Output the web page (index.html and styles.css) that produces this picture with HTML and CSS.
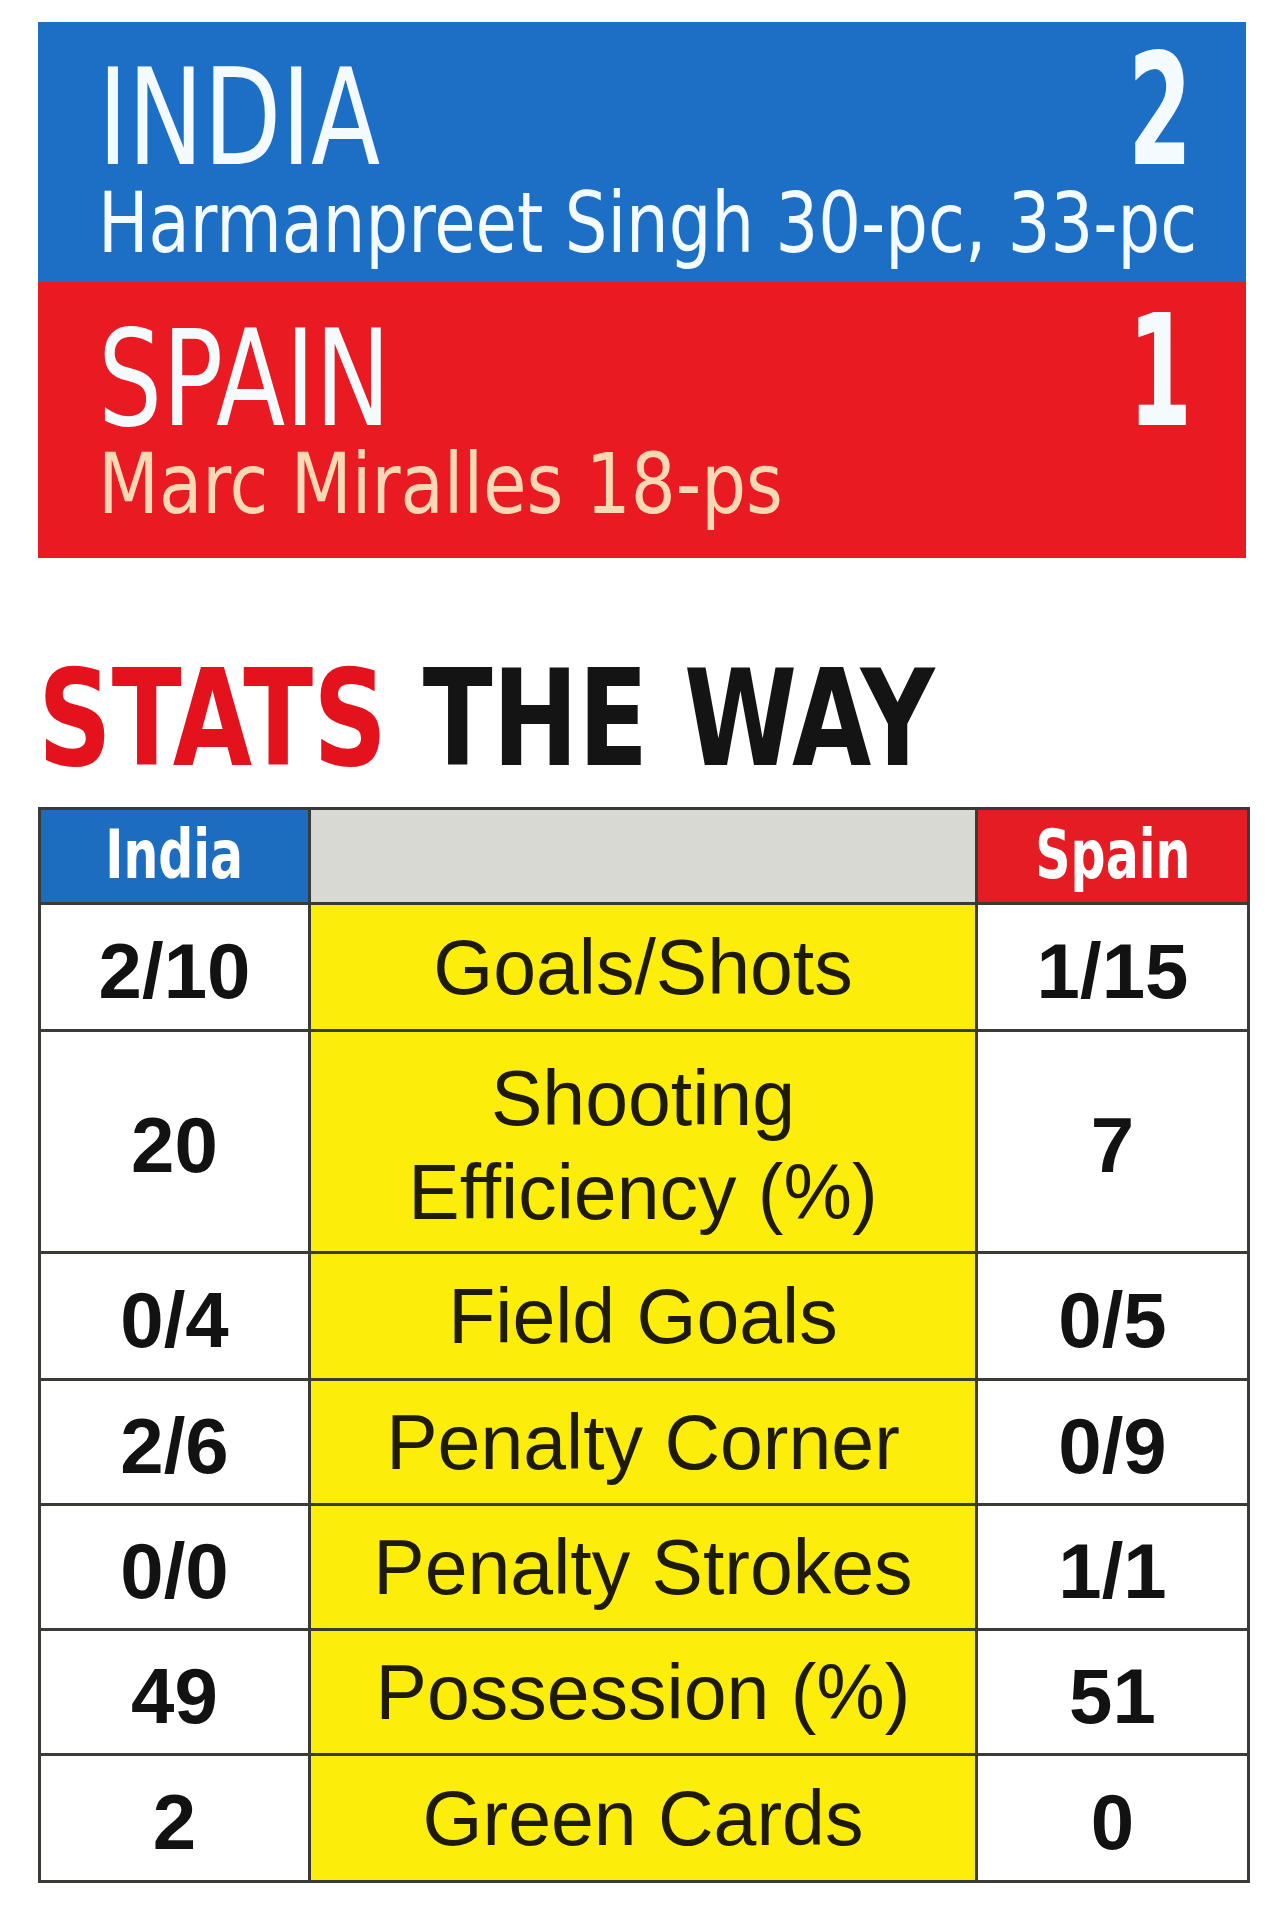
FILE: index.html
```html
<!DOCTYPE html>
<html lang="en">
<head>
<meta charset="utf-8">
<title>India 2 Spain 1 — Stats the way</title>
<link rel="stylesheet" href="styles.css">
</head>
<body>
<main class="page">
  <section class="scoreboard">
    <div class="team team-india">
      <div class="team-row">
        <span class="team-name">INDIA</span>
        <span class="team-score">2</span>
      </div>
      <div class="scorers">Harmanpreet Singh 30-pc, 33-pc</div>
    </div>
    <div class="team team-spain">
      <div class="team-row">
        <span class="team-name">SPAIN</span>
        <span class="team-score">1</span>
      </div>
      <div class="scorers scorers-spain">Marc Miralles 18-ps</div>
    </div>
  </section>

  <h1 class="title"><span class="title-red">STATS</span> THE WAY</h1>

  <section class="stats">
    <div class="cell head head-india"><span class="head-text">India</span></div>
    <div class="cell head head-mid"></div>
    <div class="cell head head-spain"><span class="head-text">Spain</span></div>

    <div class="cell val">2/10</div>
    <div class="cell label">Goals/Shots</div>
    <div class="cell val">1/15</div>

    <div class="cell val">20</div>
    <div class="cell label label-tall">Shooting<br>Efficiency (%)</div>
    <div class="cell val">7</div>

    <div class="cell val">0/4</div>
    <div class="cell label">Field Goals</div>
    <div class="cell val">0/5</div>

    <div class="cell val">2/6</div>
    <div class="cell label">Penalty Corner</div>
    <div class="cell val">0/9</div>

    <div class="cell val">0/0</div>
    <div class="cell label">Penalty Strokes</div>
    <div class="cell val">1/1</div>

    <div class="cell val">49</div>
    <div class="cell label">Possession (%)</div>
    <div class="cell val">51</div>

    <div class="cell val">2</div>
    <div class="cell label">Green Cards</div>
    <div class="cell val">0</div>
  </section>
</main>
</body>
</html>
```

FILE: styles.css
```css
html, body {
  margin: 0;
  padding: 0;
  background: #ffffff;
}

.page {
  padding: 22px 0 0 38px;
  width: 1212px;
}

/* ---------- scoreboard ---------- */
.scoreboard {
  width: 1208px;
}

.team {
  box-sizing: border-box;
  padding: 29px 54px 0 60px;
  color: #f4fbff;
  font-family: "DejaVu Sans Condensed", "DejaVu Sans", sans-serif;
}

.team-india {
  height: 260px;
  background: #1d6fc6;
}

.team-spain {
  height: 276px;
  padding-top: 30px;
  background: #ea1a22;
}

.team-row {
  display: flex;
  justify-content: space-between;
  align-items: baseline;
}

.team-name {
  display: inline-block;
  font-size: 133px;
  line-height: 120px;
  transform: scaleX(0.845);
  transform-origin: left center;
}

.team-score {
  display: inline-block;
  font-size: 155px;
  line-height: 120px;
  font-weight: bold;
  transform: scaleX(0.66);
  transform-origin: right center;
}

.scorers {
  margin-top: 3px;
  font-size: 84px;
  line-height: 84px;
  white-space: nowrap;
  transform: scaleX(0.89);
  transform-origin: left center;
}

.scorers-spain {
  color: #f9d9b4;
  transform: scaleX(0.935);
}

/* ---------- title ---------- */
.title {
  margin: 94px 0 0 0;
  font-family: "DejaVu Sans Condensed", "DejaVu Sans", sans-serif;
  font-weight: bold;
  font-size: 134px;
  line-height: 134px;
  color: #141414;
  white-space: nowrap;
  transform: scaleX(0.85);
  transform-origin: left center;
}

.title-red {
  color: #e3121c;
}

/* ---------- stats table ---------- */
.stats {
  margin-top: 21px;
  display: grid;
  grid-template-columns: 267px 664px 269px;
  grid-template-rows: 92px 124px 219px 124px 122px 122px 122px 124px;
  gap: 3px;
  padding: 3px;
  background: #3a3a36;
  width: 1206px;
}

.cell {
  display: flex;
  align-items: center;
  justify-content: center;
  text-align: center;
  background: #ffffff;
  box-sizing: border-box;
}

.head {
  font-family: "DejaVu Sans Condensed", "DejaVu Sans", sans-serif;
  font-weight: bold;
  font-size: 68px;
  color: #ffffff;
  padding-bottom: 4px;
}

.head-text {
  display: inline-block;
  transform: scaleX(0.8);
}

.head-india {
  background: #1c6cc0;
}

.head-mid {
  background: #d9d9d3;
}

.head-spain {
  background: #e51c23;
}

.val {
  font-family: "Liberation Sans", "Arial", sans-serif;
  font-weight: bold;
  font-size: 78px;
  color: #121212;
  padding-top: 8px;
}

.label {
  background: #fcee0a;
  font-family: "Liberation Sans", "Arial", sans-serif;
  font-size: 77px;
  line-height: 94px;
  color: #1e1a0c;
}

.label-tall {
  padding-top: 6px;
}
```
